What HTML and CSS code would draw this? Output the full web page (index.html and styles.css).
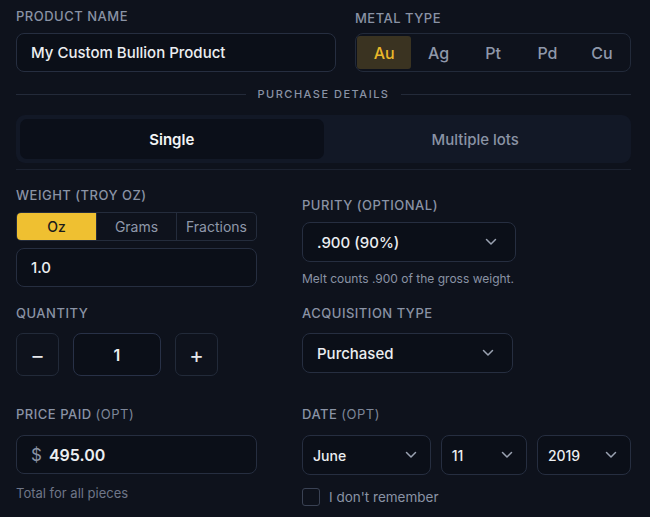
FILE: index.html
```html
<!DOCTYPE html>
<html lang="en">
<head>
<meta charset="UTF-8">
<meta name="viewport" content="width=device-width, initial-scale=1.0">
<title>Add Holding</title>
<link rel="stylesheet" href="styles.css">
</head>
<body>
<div class="form">
    <div class="top-row">
        <div class="field name-field">
            <label class="label" for="name">Product name</label>
            <input class="input" type="text" id="name" value="My Custom Bullion Product">
        </div>
        <div class="field metal-field">
            <span class="label">Metal type</span>
            <div class="metal-group">
                <button class="metal active">Au</button>
                <button class="metal">Ag</button>
                <button class="metal">Pt</button>
                <button class="metal">Pd</button>
                <button class="metal">Cu</button>
            </div>
        </div>
    </div>

    <div class="section-divider"><span>Purchase details</span></div>

    <div class="tabs">
        <button class="tab active">Single</button>
        <button class="tab">Multiple lots</button>
    </div>
    <div class="rule"></div>

    <div class="grid">
        <div class="field row-1">
            <span class="label">Weight (troy oz)</span>
            <div class="units">
                <button class="unit active">Oz</button>
                <button class="unit">Grams</button>
                <button class="unit">Fractions</button>
            </div>
            <input class="input small-gap" type="text" value="1.0">
        </div>
        <div class="field row-1 purity-field">
            <span class="label">Purity (optional)</span>
            <div class="select purity-select">
                <span>.900 (90%)</span>
                <svg class="chev" viewBox="0 0 12 8"><path d="M1.5 1.5 L6 6 L10.5 1.5"/></svg>
            </div>
            <p class="hint">Melt counts .900 of the gross weight.</p>
        </div>

        <div class="field row-2">
            <span class="label">Quantity</span>
            <div class="qty">
                <button class="qty-btn">&minus;</button>
                <input class="qty-input" type="text" value="1">
                <button class="qty-btn">+</button>
            </div>
        </div>
        <div class="field row-2">
            <span class="label">Acquisition type</span>
            <div class="select acq-select">
                <span>Purchased</span>
                <svg class="chev" viewBox="0 0 12 8"><path d="M1.5 1.5 L6 6 L10.5 1.5"/></svg>
            </div>
        </div>

        <div class="field">
            <span class="label">Price paid <span class="opt">(opt)</span></span>
            <div class="input price">
                <span class="currency">$</span>
                <span class="amount">495.00</span>
            </div>
            <p class="hint muted">Total for all pieces</p>
        </div>
        <div class="field">
            <span class="label">Date <span class="opt">(opt)</span></span>
            <div class="date-row">
                <div class="select date-select month">
                    <span>June</span>
                    <svg class="chev" viewBox="0 0 12 8"><path d="M1.5 1.5 L6 6 L10.5 1.5"/></svg>
                </div>
                <div class="select date-select day">
                    <span>11</span>
                    <svg class="chev" viewBox="0 0 12 8"><path d="M1.5 1.5 L6 6 L10.5 1.5"/></svg>
                </div>
                <div class="select date-select year">
                    <span>2019</span>
                    <svg class="chev" viewBox="0 0 12 8"><path d="M1.5 1.5 L6 6 L10.5 1.5"/></svg>
                </div>
            </div>
            <label class="check">
                <span class="box"></span>
                I don't remember
            </label>
        </div>
    </div>
</div>
</body>
</html>
```

FILE: styles.css
```css
body {
    margin: 0;
    background-color: #0e121c;
    font-family: Inter, "Noto Sans", sans-serif;
    color: #e9eaec;
}
button,
input {
    font-family: inherit;
}
.form {
    width: 615px;
    padding: 8px 19px 0 16px;
}
.top-row {
    display: flex;
    gap: 19px;
}
.field {
    display: flex;
    flex-direction: column;
}
.name-field {
    width: 320px;
}
.metal-field {
    width: 276px;
    padding-top: 2px;
}
.label {
    font-size: 13px;
    line-height: 16px;
    font-weight: 500;
    letter-spacing: 0.5px;
    text-transform: uppercase;
    color: #8a93a5;
    margin-bottom: 9px;
}
.metal-field .label {
    margin-bottom: 7px;
}
.label .opt {
    font-weight: 400;
    color: #7d8698;
}
.input {
    box-sizing: border-box;
    height: 39px;
    padding: 0 14px;
    background-color: #0b0f18;
    border: 1px solid #262e40;
    border-radius: 8px;
    color: #eceef1;
    font-size: 15px;
    font-weight: 500;
    outline: none;
}
.metal-group {
    box-sizing: border-box;
    display: flex;
    height: 39px;
    padding: 2px 1px;
    border: 1px solid #222a3a;
    border-radius: 8px;
}
.metal {
    flex: 1;
    background: none;
    border: none;
    border-radius: 3px;
    color: #8f98aa;
    font-size: 16px;
    font-weight: 500;
}
.metal.active {
    background-color: #3a3321;
    color: #e9b82a;
}
.section-divider {
    display: flex;
    align-items: center;
    gap: 12px;
    margin: 15px 0 14px;
    font-size: 11px;
    font-weight: 500;
    letter-spacing: 1.5px;
    text-transform: uppercase;
    color: #8a93a5;
}
.section-divider::before,
.section-divider::after {
    content: "";
    flex: 1;
    height: 1px;
    background-color: #232a39;
}
.tabs {
    display: flex;
    padding: 4px;
    background-color: #121826;
    border-radius: 9px;
}
.tab {
    flex: 1;
    height: 40px;
    background: none;
    border: none;
    border-radius: 7px;
    color: #8a93a5;
    font-size: 15px;
    font-weight: 500;
}
.tab.active {
    background-color: #0b0f19;
    color: #f3f4f6;
    font-weight: 600;
}
.rule {
    height: 1px;
    margin-top: 6px;
    background-color: #1c2230;
}
.grid {
    display: grid;
    grid-template-columns: 241px 329px;
    column-gap: 45px;
    padding-top: 17px;
}
.grid > .field {
    margin-bottom: 24px;
}
.grid > .row-1 {
    margin-bottom: 18px;
}
.grid > .row-2 {
    margin-bottom: 30px;
}
.purity-field {
    padding-top: 10px;
}
.units {
    box-sizing: border-box;
    display: flex;
    height: 29px;
    border: 1px solid #242c3c;
    border-radius: 5px;
    overflow: hidden;
}
.unit {
    flex: 1;
    background: none;
    border: none;
    border-left: 1px solid #242c3c;
    color: #8f98aa;
    font-size: 14px;
}
.unit:first-child {
    border-left: none;
}
.unit.active {
    background-color: #efc031;
    color: #1b1b1b;
    font-weight: 500;
}
.small-gap {
    margin-top: 7px;
}
.select {
    box-sizing: border-box;
    display: flex;
    align-items: center;
    justify-content: space-between;
    height: 40px;
    padding: 0 18px 0 14px;
    background-color: #0b0f18;
    border: 1px solid #262e40;
    border-radius: 8px;
    font-size: 15px;
    font-weight: 500;
    color: #eceef1;
}
.chev {
    width: 12px;
    height: 8px;
    fill: none;
    stroke: #9aa2b1;
    stroke-width: 1.5;
    stroke-linecap: round;
    stroke-linejoin: round;
}
.purity-select {
    width: 214px;
}
.acq-select {
    width: 211px;
    margin-top: 3px;
}
.hint {
    margin: 9px 0 0;
    font-size: 12px;
    color: #8a93a5;
}
.hint.muted {
    margin-top: 11px;
    font-size: 13px;
    color: #6e7688;
}
.qty {
    display: flex;
    align-items: center;
    gap: 14px;
    margin-top: 3px;
}
.qty-btn {
    width: 43px;
    height: 43px;
    background: none;
    border: 1px solid #222a39;
    border-radius: 7px;
    color: #e6e8eb;
    font-size: 22px;
    font-weight: 400;
    padding: 0;
}
.qty-input {
    box-sizing: border-box;
    width: 88px;
    height: 43px;
    background-color: #0b0f18;
    border: 1px solid #283147;
    border-radius: 8px;
    color: #eceef1;
    font-size: 16px;
    font-weight: 600;
    text-align: center;
    outline: none;
}
.price {
    display: flex;
    align-items: center;
    gap: 7px;
    margin-top: 4px;
    font-size: 16px;
}
.currency {
    color: #8a93a5;
    font-size: 17px;
    font-weight: 400;
}
.amount {
    font-weight: 600;
}
.date-row {
    display: flex;
    gap: 10px;
    margin-top: 4px;
}
.date-select {
    height: 40px;
    padding: 0 13px 0 10px;
    font-size: 14px;
}
.month {
    width: 130px;
}
.day {
    width: 87px;
}
.year {
    width: 95px;
}
.check {
    display: flex;
    align-items: center;
    gap: 9px;
    margin-top: 13px;
    font-size: 13.5px;
    color: #8a93a5;
}
.box {
    box-sizing: border-box;
    width: 18px;
    height: 18px;
    border: 1px solid #3a4254;
    border-radius: 3px;
}
```
